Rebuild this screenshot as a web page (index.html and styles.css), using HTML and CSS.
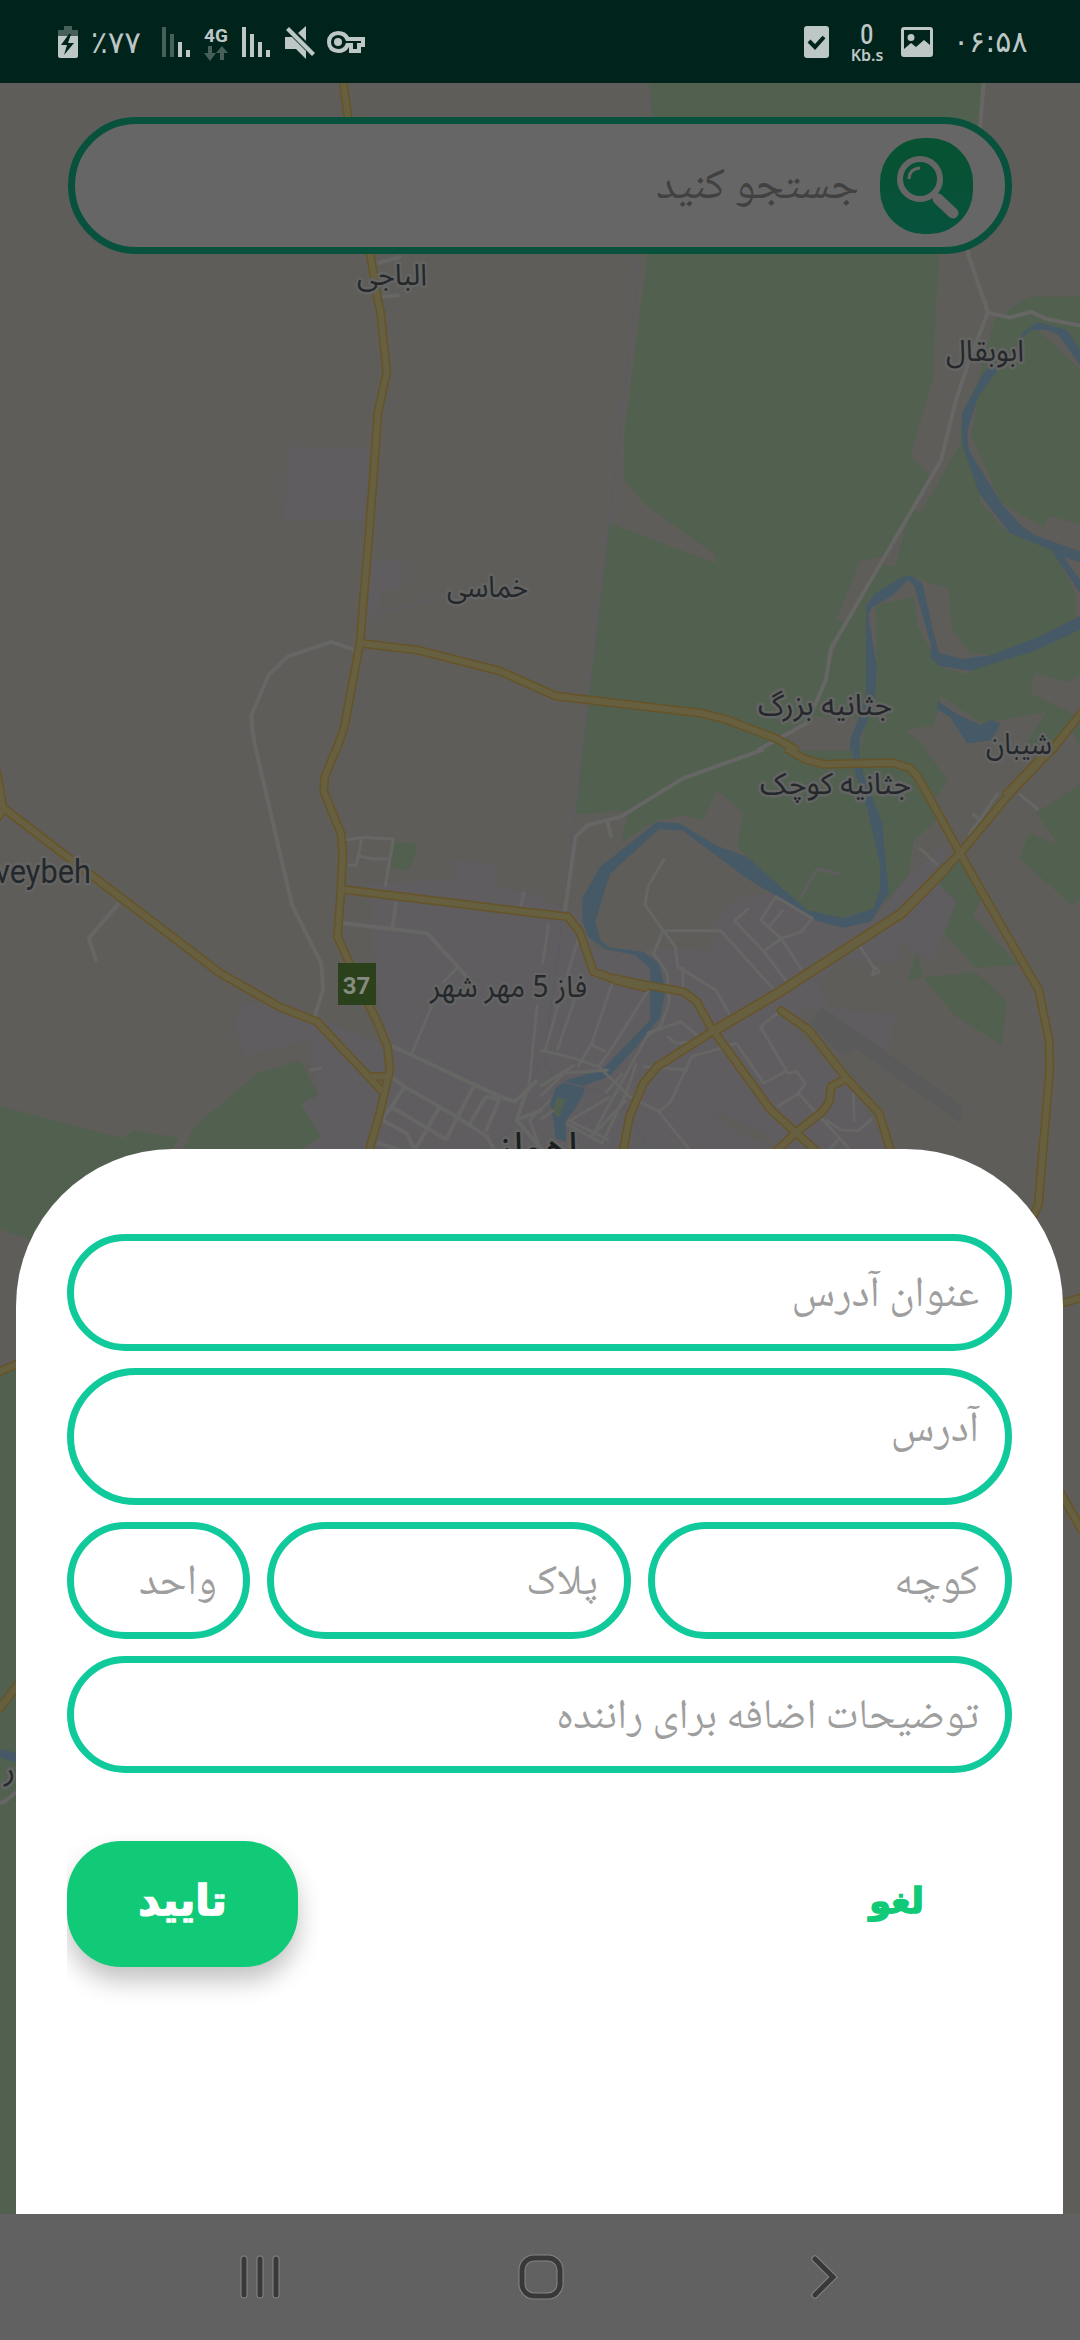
FILE: index.html
```html
<!DOCTYPE html>
<html lang="fa" dir="rtl">
<head>
<meta charset="utf-8">
<title>ثبت آدرس</title>
<link rel="stylesheet" href="styles.css">
</head>
<body>
<div class="screen">
  <svg class="map" viewBox="0 0 1080 2340" direction="ltr" aria-hidden="true">
    <defs>
      <g id="highways">
        <g transform="scale(.3444 .3333)">
          <path d="M996 240L1010 350L1030 560L1075 762L1098 905"/>
        </g>
        <g transform="translate(0 300) scale(.3444 .3333)">
          <path d="M1096 -2L1104 30L1123 215L1097 340L1085 520L1070 720L1045 1030L1000 1280L976 1352"/>
          <path d="M1045 1030L1210 1050L1450 1113L1575 1170"/>
        </g>
        <g transform="translate(540 300) scale(.3444 .3333)">
          <path d="M-10 1163L45 1188L470 1240L545 1260L690 1318L748 1352"/>
          <path d="M1485 1352L1575 1235"/>
        </g>
        <g transform="translate(0 750) scale(.3444 .3333)">
          <path d="M976 -2L943 80L940 125L990 250L995 310L990 420L980 560L1040 700L1095 815L1125 890L1132 960L1100 1100L1072 1200"/>
          <path d="M-10 60L8 170L30 190L640 670L720 717L810 770L920 815L1080 990L1110 1025"/>
          <path d="M990 418L1575 492M8 180L-12 210M1075 980L1132 978"/>
        </g>
        <g transform="translate(540 750) scale(.3444 .3333)">
          <path d="M-10 490L80 500L115 545L155 665L215 688L415 725L455 755L495 830L600 980L670 1080L810 1210"/>
          <path d="M715 -5L770 28L825 43L1025 38L1075 55L1100 85L1220 310L1280 420L1448 720L1478 870L1480 960L1448 1352"/>
          <path d="M1485 -2L1380 110L1220 310L1050 490L690 730L500 845L340 950L300 1000L260 1100L240 1210"/>
          <path d="M700 782L780 840L890 985L985 1090L1020 1210M890 985L845 1010L840 1055L820 1085L740 1150L680 1210" stroke-linecap="round"/>
        </g>
        <g transform="translate(0 1140) scale(.3444 .3333)"><path d="M-5 696L60 668M-5 1710L60 1625"/></g>
        <g transform="translate(540 1140) scale(.3444 .3333)">
          <path d="M1462 -5L1448 190L1420 260M1500 495L1575 472M1510 1055L1575 1175"/>
        </g>
      </g>
    </defs>

    <rect class="land" width="1080" height="2340"/>

    <g class="park">
      <path transform="translate(540 0) scale(.3444 .3333)" d="M316 240L326 350L330 700L313 762L295 905H1150L1160 762L1275 380L1284 240Z"/>
      <path transform="translate(540 0) scale(.3444 .3333)" d="M1405 905L1420 890H1575V905Z"/>
      <path transform="translate(540 300) scale(.3444 .3333)" d="M295 -2L245 400V540L300 610L510 765V790L203 670L123 1352H1575V-2Z"/>
      <g transform="translate(540 750) scale(.3444 .3333)">
        <path d="M123 -2L105 195L260 180L235 280L330 215L415 195L475 210L515 120L590 190L573 290L600 320L775 480L870 505L960 480L1020 440L1070 375L1085 270L1150 215L1145 150L1187 90L1115 -2Z"/>
        <path d="M1220 320L1282 450L1255 495L1390 645L1265 653L1155 530L1208 455L1155 405Z"/>
        <path d="M1096 600L1112 680L1066 695ZM1112 683L1265 665L1355 755L1340 885L1205 797ZM1420 248L1507 286L1440 190L1575 98V440L1545 467L1393 325Z"/>
        <path d="M260 833L290 840L180 960L178 935ZM370 735L355 830L330 850ZM535 972L550 955L595 975L570 1010Z"/>
      </g>
      <g transform="translate(0 750) scale(.3444 .3333)">
        <path d="M1143 275L1208 282L1205 315L1185 360L1135 355Z"/>
        <path d="M0 1068L355 1165L390 1140L520 1165L495 1210L300 1380L90 1470L0 1437ZM525 1200L565 1130L750 968L870 932L925 1035L875 1062L932 1160L870 1200Z"/>
      </g>
      <path d="M0 1376L16 1368V2214H0Z"/>
    </g>

    <g class="land">
      <g transform="translate(540 300) scale(.3444 .3333)">
        <path d="M1150 -2L1143 230L1075 465L1130 525L1085 630L1105 640L1222 430L1225 340L1270 250L1300 130L1320 60L1405 -2Z"/>
        <path d="M1070 650L1030 802L995 792ZM995 768L930 783L862 955L885 967ZM885 967L840 1050L830 1140L790 1250L945 1255L950 900L1080 830L1185 865L1197 990L1250 1060L1310 1065L1240 1123L1160 1100L1095 975L1085 890L975 915L978 1130L930 1352H760L705 1300L790 1250Z"/>
        <path d="M1435 80L1575 215V180L1520 92ZM1270 300L1253 410L1340 610L1460 680L1478 648L1575 675V770L1360 700L1280 610L1235 400ZM1575 960L1555 960V880L1490 750L1575 780Z"/>
        <path d="M1435 1120L1530 1147L1575 1122V1255L1425 1180ZM1165 1187L1280 1270L1470 1235L1400 1352H1130L1062 1292L1143 1275Z"/>
        <path d="M1470 1352L1545 1290L1575 1352Z"/>
      </g>
      <path transform="translate(540 750) scale(.3444 .3333)" d="M1130 -2H1480L1400 100L1450 180L1300 320L1220 300L1150 205L1190 90Z"/>
    </g>

    <g class="urban">
      <path transform="translate(0 300) scale(.3444 .3333)" d="M836 440L1072 447L1055 662L825 660ZM1080 780H1167V868L1100 875V945L1060 965Z"/>
      <g transform="translate(0 750) scale(.3444 .3333)">
        <path d="M1072 400L1315 388L1320 330L1440 345V415H1475L1575 440V1210H870L932 1160L875 1062L925 1035L895 870L710 920L680 825L710 750L960 820L1130 890L1085 640Z"/>
      </g>
      <g transform="translate(540 750) scale(.3444 .3333)">
        <path d="M0 450L110 490L160 600L290 605L340 700L320 810L180 960L80 990L0 1060ZM290 605L440 590L570 445L680 430L780 505L960 520L1070 375L1180 280L1155 400L1208 455L1140 640L1040 570L1040 640L920 625L840 770L760 780L750 860L890 980L1010 1190V1210H0V1060L80 990L330 850Z"/>
        <path d="M810 770L1036 795L1010 900L850 860Z"/>
      </g>
    </g>
    <g class="land" transform="translate(540 750) scale(.3444 .3333)">
      <path d="M360 530L520 545L480 600L390 590ZM500 1080L650 1150L690 1200L560 1140ZM880 620L960 690L920 760L840 770L810 700Z"/>
    </g>
    <path class="airfield" transform="translate(540 750) scale(.3444 .3333)" d="M818 770L1230 1072L1218 1117L915 895L880 920L785 820Z"/>

    <g class="river">
      <g transform="translate(540 300) scale(.3444 .3333)">
        <path d="M1575 160L1530 90L1445 66L1405 95L1370 150L1290 215L1225 340V430L1275 580L1365 700L1485 750L1575 890V850L1520 770L1575 790V757L1435 705L1350 640L1360 680L1420 705L1340 610L1245 450L1240 395L1272 290L1395 120L1425 90H1470L1505 105L1575 205Z"/>
        <path d="M900 1352V1320L925 1255L947 1180V915L975 880L1045 835L1075 826L1110 850L1157 1058L1225 1077L1310 1065L1450 1010L1575 945V985L1435 1053L1248 1112L1160 1098L1135 1075V1035L1088 860L1068 840L1022 888L965 922L953 945L978 1100L970 1220L930 1310L928 1352Z"/>
        <path d="M1155 1203L1210 1242L1280 1275L1310 1260L1337 1270L1310 1322L1240 1330L1190 1250L1155 1230Z"/>
      </g>
      <g transform="translate(540 750) scale(.3444 .3333)">
        <path d="M907 -2H925L940 80L993 215L1013 430L960 515L878 533L805 513L600 385L415 242L345 238L203 372L160 515L175 570L200 592L300 605L345 640L365 720L350 800L280 890L200 980L130 1005L125 1035L100 1080L75 1110V1175L45 1165L40 1115L30 1060L45 1015L80 990L180 960L320 810V700L320 655L275 615L190 598L140 560L123 510V445L175 350L340 215L405 220L515 288L600 320L775 480L880 505L970 475L987 415V340L945 155L915 70Z"/>
      </g>
      <path transform="translate(0 1600) scale(.3444 .3333)" d="M0 448L50 458V490L0 472Z"/>
    </g>
    <path class="park" transform="translate(540 750) scale(.3444 .3333)" d="M50 1040L75 1050L55 1103L35 1085Z"/>

    <g class="rail">
      <path transform="translate(540 0) scale(.3444 .3333)" d="M316 240L324 350M290 762L277 905"/>
      <path transform="translate(540 300) scale(.3444 .3333)" d="M277 -2L123 1352"/>
      <path transform="translate(540 750) scale(.3444 .3333)" d="M123 -2L70 480L15 900L18 950L50 990L230 1040L320 1200"/>
      <path transform="translate(0 750) scale(.3444 .3333)" d="M1568 940L1475 1150L1400 1200"/>
    </g>

    <g class="streets">
      <path transform="translate(540 0) scale(.3444 .3333)" d="M1289 240L1277 390M1242 750L1245 770L1290 905"/>
      <path transform="translate(0 0) scale(.3444 .3333)" d="M1095 790L1165 770M1110 890L1160 885"/>
      <g transform="translate(0 300) scale(.3444 .3333)">
        <path d="M1030 1050L962 1026L835 1070L780 1125L730 1245L733 1290L743 1352"/>
        <path class="faint" d="M1060 955L1290 885"/>
      </g>
      <g transform="translate(540 300) scale(.3444 .3333)">
        <path d="M1290 -2L1300 38L1240 200L1205 310L1165 480L845 1045L830 1140L775 1270L630 1352M1300 38L1365 53L1425 35L1470 57L1575 78"/>
      </g>
      <g transform="translate(0 750) scale(.3444 .3333)">
        <path d="M743 -2L848 465L933 640L938 720L912 805M345 460L258 565L280 635M990 518L1240 550L1330 650L1360 690M1150 455L1140 532"/>
        <path class="lane" d="M1005 270L1055 262L1142 268L1118 412M1050 268L1035 345H1010M1040 318L1085 327H1135M1330 650L1285 700M1255 765L1195 912M1522 425L1512 470M900 960L935 955M1560 765L1535 1020L1495 1055L1390 1010"/>
        <path d="M1130 885L1195 915L1450 1040L1495 1055L1560 990M1135 980L1175 1010L1325 1100L1415 1160L1435 1200M1175 1010L1110 1110L1180 1150L1205 1200M1135 1070L1295 1168L1375 1010M1275 1075L1205 1200M1450 1050L1410 1145M1410 1040L1365 1120M1410 1040L1450 1050M1095 1178L1160 1200M1530 1020L1500 1110L1575 1200M1500 1110L1575 1080"/>
      </g>
      <g transform="translate(540 750) scale(.3444 .3333)">
        <path d="M650 -2L415 85L235 200L140 225L103 260L72 485M195 210L207 262"/>
        <path class="lane" d="M362 325L313 410L305 465L358 542H525L680 720M358 542L330 610L370 670L375 760L350 830L310 860L150 1160M358 542L393 590L400 650L510 720L555 800M415 650V720M605 475L565 512L650 605L700 565L760 545L790 505L685 440L640 510L700 565L760 660M650 605L720 700M705 480L665 530M1100 292L1155 345M1330 128L1280 205L1245 255M1255 190L1290 220M1390 130L1447 180M930 590L970 655L965 675L985 665L970 650M700 782L640 830L720 970L745 965L770 1000L750 1030L690 1070M570 880L650 1000L720 960M750 1030L870 1165L900 1200M870 1165L830 1210M910 1030L912 1115M830 1110L875 1140L925 1142L965 1105"/>
        <path class="lane" d="M25 520L8 640M110 570L60 740L15 900M100 750L50 900M210 700L150 880L110 950M315 720L205 900L170 950M0 900L100 925L170 950L260 1040L345 1085L435 1200M0 1010L100 945M0 1040L70 970L200 960M150 885L190 905M440 920L380 1055L345 1085M300 950L430 960M240 970L190 1030M310 850L410 815L460 860M370 860L395 880L440 875M440 920L490 905L570 880M205 1040L90 1110M80 1110L200 1170M250 1050L150 1160M0 1110L40 1080"/>
        <path class="lane" d="M30 1050L-30 1110L-5 1180M75 1120L180 1180L250 1030L280 940"/>
        <path class="faint" d="M755 445L805 357L872 372"/>
      </g>
      <path d="M0 1803Q6 1802 16 1792"/>
      <path class="track" d="M186 1138L178 1149"/>
    </g>

    <use href="#highways" class="casing"/>
    <g class="casing wide">
      <path id="avenue" d="M712 1032L778 993L902 913L948 866M614 979L648 987M1051 749L1006 796"/>
    </g>
    <use href="#highways" class="surface"/>
    <use href="#avenue" class="surface wide"/>

    <g class="labels">
      <text x="357" y="285" textLength="70" lengthAdjust="spacingAndGlyphs">الباجی</text>
      <text x="946" y="361" textLength="78" lengthAdjust="spacingAndGlyphs">ابوبقال</text>
      <text x="447" y="597" textLength="81" lengthAdjust="spacingAndGlyphs">خماسی</text>
      <text x="758" y="715" textLength="134" lengthAdjust="spacingAndGlyphs">جثانیه بزرگ</text>
      <text x="986" y="754" textLength="66" lengthAdjust="spacingAndGlyphs">شیبان</text>
      <text x="760" y="794" textLength="151" lengthAdjust="spacingAndGlyphs">جثانیه کوچک</text>
      <text x="430" y="997" textLength="157" lengthAdjust="spacingAndGlyphs" direction="rtl" text-anchor="end">فاز 5 مهر شهر</text>
      <text class="latin" x="-5" y="883" textLength="96" lengthAdjust="spacingAndGlyphs">veybeh</text>
      <text class="city" x="498" y="1162" textLength="80" lengthAdjust="spacingAndGlyphs">اهواز</text>
      <text x="4" y="1780">ر</text>
    </g>
    <rect class="shield" x="338" y="963" width="38" height="42"/>
    <text class="shield-number" x="356.500" y="994" text-anchor="middle">37</text>
  </svg>

  <header class="status" dir="ltr">
    <div class="status-group">
      <svg width="22" height="34" viewBox="0 0 22 34"><path class="dim" d="M7 1h8v4h6v7H1V5h6z"/><path d="M1 11h20v20q0 2-2 2H3q-2 0-2-2z"/><path class="hole" d="M12 9L4 20h6L7 30L17 18h-6L14 9z"/></svg>
      <span class="percent">٪۷۷</span>
      <svg class="bars" width="28" height="32" viewBox="0 0 28 32"><path class="dim" d="M0 1h4v30H0zM8 8h4v23H8z"/><path d="M16 16h4v15h-4zM24 24h4v7h-4z"/></svg>
      <span class="network">4G<svg width="24" height="15" viewBox="0 0 24 15"><path class="dim" d="M4 0h4v7h4l-6 8-6-8h4zM16 14h4V7h4l-6-7-6 7h4z"/></svg></span>
      <svg width="28" height="32" viewBox="0 0 28 32"><path d="M0 1h4v30H0zM8 8h4v23H8zM16 16h4v15h-4zM24 24h4v7h-4z"/></svg>
      <svg class="mute" width="30" height="34" viewBox="0 0 30 34"><path d="M0 12h7l14 14v8l-10-10H0zM13 8l8-7v15zM1 5l3-3 26 26-3 3z"/></svg>
      <svg class="key" width="38" height="24" viewBox="0 0 38 24"><path fill-rule="evenodd" d="M11 1Q19 1 22 7h16v10h-4v6H22v-6Q19 23 11 23Q0 22 0 12T11 1zm0 4Q4 6 4 12t7 7q6 0 8-6h7v6h4v-6h4v-2H19Q17 5 11 5zm0 3a4 4 0 1 1 0 8 4 4 0 0 1 0-8z"/></svg>
    </div>
    <div class="status-group right">
      <svg width="25" height="32" viewBox="0 0 25 32"><rect width="25" height="32" rx="3"/><path class="tick" d="M5 15l6 6 9-10"/></svg>
      <span class="speed"><b>0</b><small>Kb.s</small></span>
      <svg width="32" height="30" viewBox="0 0 32 30"><path fill-rule="evenodd" d="M3 0h26q3 0 3 3v24q0 3-3 3H3q-3 0-3-3V3q0-3 3-3zm0 3v19l7-6 5 4 8-7 6 5V3zm7 4a3.500 3.500 0 1 1 0 7 3.500 3.500 0 0 1 0-7z"/></svg>
      <span class="clock">۰۶:۵۸</span>
    </div>
  </header>

  <div class="search">
    <span class="search-icon"><svg width="93" height="96" viewBox="0 0 93 96"><circle class="ring" cx="40" cy="41" r="20"/><path class="glint" d="M29 41Q29 31 40 30"/><path class="handle" d="M58 61L73 75"/></svg></span>
    <span class="hint search-hint">جستجو کنید</span>
  </div>

  <main class="sheet">
    <div class="field"><span class="hint">عنوان آدرس</span></div>
    <div class="field tall"><span class="hint">آدرس</span></div>
    <div class="row">
      <div class="field"><span class="hint">کوچه</span></div>
      <div class="field"><span class="hint">پلاک</span></div>
      <div class="field"><span class="hint">واحد</span></div>
    </div>
    <div class="field"><span class="hint note">توضیحات اضافه برای راننده</span></div>
    <div class="actions">
      <span class="cancel">لغو</span>
      <span class="confirm"><span>تایید</span></span>
    </div>
  </main>

  <nav class="navbar" dir="ltr">
    <svg width="42" height="46" viewBox="0 0 42 46"><path class="halo" d="M5 5v36M21 5v36M37 5v36"/><path d="M5 5v36M21 5v36M37 5v36"/></svg>
    <svg class="home" width="46" height="46" viewBox="0 0 46 46"><rect class="halo" x="4" y="4" width="38" height="38" rx="12"/><rect x="4" y="4" width="38" height="38" rx="12"/></svg>
    <svg width="30" height="46" viewBox="0 0 30 46"><path class="halo" d="M5 5l18 18L5 41"/><path d="M5 5l18 18L5 41"/></svg>
  </nav>
</div>
</body>
</html>
```
FILE: styles.css
```css
* { box-sizing: border-box; }
body { margin: 0; font-family: "DejaVu Sans", sans-serif; }

.screen {
  position: relative;
  display: flex;
  flex-direction: column;
  width: 1080px;
  height: 2340px;
  overflow: hidden;
  background: #5f5d5a;
}

/* map */
.map { position: absolute; inset: 0; width: 1080px; height: 2340px; }
.map path { vector-effect: non-scaling-stroke; }
.land { fill: #5f5d5a; }
.park { fill: #526050; }
.urban { fill: #605d60; }
.river { fill: #465966; }
.airfield { fill: #5a5a5a; }
.rail { fill: none; stroke: #5b5c61; stroke-width: 1.5; }
.streets { fill: none; stroke: #666665; stroke-width: 4; stroke-linejoin: round; }
.streets .lane { stroke-width: 3; }
.streets .faint { stroke: #605d60; stroke-width: 3; }
.streets .track { stroke: #605d5c; stroke-width: 7; }
.casing, .surface { fill: none; stroke-linejoin: round; }
.casing { stroke: #665428; stroke-width: 9; }
.surface { stroke: #665f40; stroke-width: 6; }
.casing.wide { stroke-width: 11; }
.surface.wide { stroke-width: 8; }
.labels {
  font-family: "Noto Sans Arabic", "Noto Naskh Arabic", "DejaVu Sans", sans-serif;
  font-size: 30px;
  fill: #25282b;
  stroke: #636463;
  stroke-width: 5;
  stroke-linejoin: round;
  paint-order: stroke;
}
.labels .latin { font-family: Roboto, sans-serif; font-size: 33px; }
.labels .city { font-size: 42px; fill: #1c1e20; }
.shield { fill: #2b411b; }
.shield-number { font: bold 24px Roboto, sans-serif; fill: #858b80; }

/* status bar */
.status {
  position: relative;
  display: flex;
  justify-content: space-between;
  height: 83px;
  padding: 0 57px;
  background: #00231b;
  color: #bdc7c5;
}
.status svg { flex: none; fill: #bdc7c5; }
.status .dim { fill: #466059; }
.status .hole { fill: #00231b; }
.status .tick { fill: none; stroke: #00231b; stroke-width: 4; }
.status-group { display: flex; align-items: center; }
.percent { width: 50px; margin: 0 21px 0 12px; font-size: 31px; line-height: 36px; white-space: nowrap; }
.network {
  display: flex;
  flex-direction: column;
  align-items: center;
  width: 24px;
  margin: 4px 14px 0;
  font: bold 19px/18px Roboto, sans-serif;
}
.network svg { margin-top: 1px; }
.mute { margin-left: 15px; }
.key { margin-left: 12px; }
.speed {
  display: flex;
  flex-direction: column;
  align-items: center;
  width: 34px;
  margin: 2px 17px 0 21px;
  font-family: Roboto, sans-serif;
}
.speed b { font-size: 27px; line-height: 24px; font-weight: 500; transform: scaleX(.85); }
.speed small { font: 600 16px/16px "Noto Sans", sans-serif; }
.clock { width: 70px; margin-left: 20px; font-size: 30px; line-height: 36px; letter-spacing: -.8px; white-space: nowrap; }

/* search box */
.search {
  position: relative;
  display: flex;
  align-items: center;
  height: 137px;
  margin: 34px 68px 0;
  padding: 0 32px;
  border: 7px solid #08523d;
  border-radius: 69px;
  background: #666;
}
.search-icon { width: 93px; height: 96px; border-radius: 44px; background: linear-gradient(#075230, #07523d); }
.search-icon svg { display: block; fill: none; stroke: #666; }
.ring { stroke-width: 6; }
.glint { stroke-width: 3; }
.handle { stroke-width: 11; stroke-linecap: round; }
.hint {
  color: #9e9e9e;
  font-family: "Noto Naskh Arabic", "Amiri", "DejaVu Sans", serif;
  font-size: 43px;
  line-height: 56px;
  white-space: nowrap;
}
.hint.note { font-size: 42px; }
.search .search-hint { margin: 4px 21px 0 0; color: #414141; font-size: 44.500px; }

/* address sheet */
.sheet {
  position: relative;
  display: flex;
  flex-direction: column;
  gap: 17px;
  height: 1065px;
  margin: 895px 17px 0 16px;
  padding: 85px 51px 0;
  border-radius: 157px 157px 0 0;
  background: #fff;
}
.field {
  display: flex;
  align-items: center;
  height: 117px;
  padding: 8px 26px 0;
  border: 7px solid #10ca9b;
  border-radius: 59px;
  background: #fff;
}
.field.tall { height: 137px; border-radius: 69px; padding-bottom: 18px; }
.row { display: grid; grid-template-columns: 364px 364px 183px; gap: 17px; }
.actions { display: flex; justify-content: space-between; align-items: center; margin-top: 51px; font-weight: bold; font-size: 36px; }
.cancel { margin: -6px 88px 0 0; color: #10ca77; font-size: 35px; -webkit-text-stroke: 1.5px #10ca77; }
.confirm {
  display: flex;
  align-items: center;
  justify-content: center;
  width: 231px;
  height: 126px;
  padding-bottom: 8px;
  border-radius: 54px;
  background: #10ca77;
  color: #fff;
  font-size: 42px;
  -webkit-text-stroke: 1.5px #fff;
  box-shadow: 0 14px 24px rgba(0, 0, 0, .24);
  clip-path: inset(-10px -50px -60px 0);
}

/* system navigation */
.navbar {
  position: relative;
  flex: 1;
  display: flex;
  align-items: center;
  justify-content: space-between;
  padding: 0 240px 0 239px;
  background: #616161;
}
.navbar svg { fill: none; stroke: #383838; stroke-width: 5; stroke-linecap: round; }
.navbar .halo { stroke: #858585; stroke-width: 7; }
.navbar .home { margin-right: 9px; }
```
